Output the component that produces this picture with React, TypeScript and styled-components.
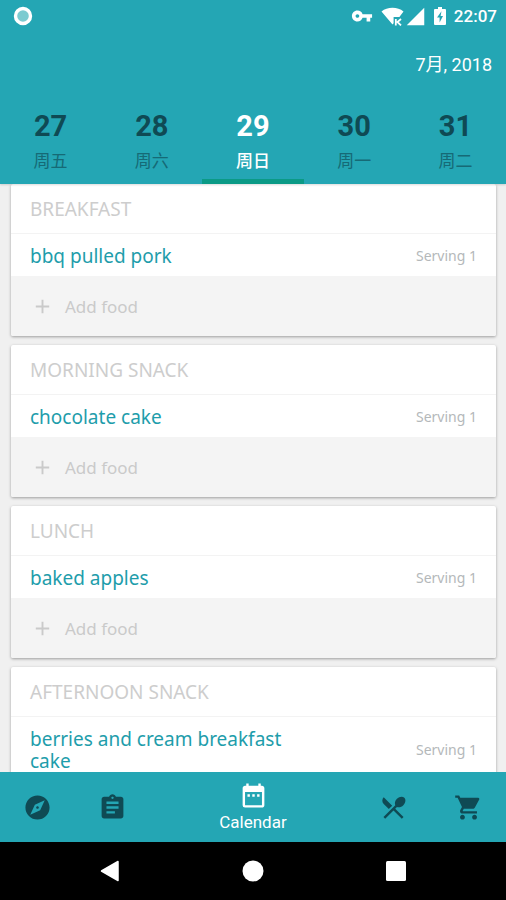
import React from "react";
import styled, { createGlobalStyle } from "styled-components";
import {
  MdAdd,
  MdAssignment,
  MdDateRange,
  MdExplore,
  MdRestaurantMenu,
  MdShoppingCart,
  MdSignalCellular4Bar,
  MdVpnKey,
} from "react-icons/md";

const teal = "#24a6b4";
const ink = "#0f4a54";

const GlobalStyle = createGlobalStyle`
  *, *::before, *::after { box-sizing: border-box; }
  body {
    margin: 0;
    font-family: Roboto, "Noto Sans CJK SC", sans-serif;
    background: #f0f0f0;
  }
  button { font: inherit; border: 0; margin: 0; padding: 0; background: none; cursor: pointer; }
`;

const Screen = styled.div`
  display: flex;
  flex-direction: column;
  height: 100vh;
  overflow: hidden;
`;

const Header = styled.header`
  flex: none;
  background: ${teal};
  color: #fff;
  box-shadow: 0 1px 2px rgba(0, 0, 0, 0.15);
  z-index: 1;
`;

const StatusBar = styled.div`
  display: flex;
  align-items: center;
  justify-content: space-between;
  height: 32px;
  padding: 0 9px 0 13px;
`;

const StatusIcons = styled.div`
  display: flex;
  align-items: center;
  gap: 8px;
  height: 32px;
`;

const SignalIcons = styled.div`
  display: flex;
  align-items: center;
`;

const Clock = styled.time`
  font-size: 17px;
  font-weight: 500;
  line-height: 32px;
`;

const Month = styled.div`
  padding: 20px 14px 0;
  text-align: right;
  font-size: 18px;
  line-height: 26px;
`;

const Days = styled.div`
  display: grid;
  grid-template-columns: repeat(5, 1fr);
  margin-top: 30px;
`;

const Day = styled.button<{ $selected: boolean }>`
  display: flex;
  flex-direction: column;
  align-items: center;
  height: 76px;
  border-bottom: 5px solid ${(p) => (p.$selected ? "#0b9a86" : "transparent")};
  color: ${(p) => (p.$selected ? "#fff" : ink)};
`;

const DayNumber = styled.span`
  font-size: 29px;
  font-weight: 700;
  line-height: 36px;
`;

const DayName = styled.span<{ $selected: boolean }>`
  margin-top: 4px;
  font-family: "Noto Sans CJK SC", sans-serif;
  font-size: 17px;
  font-weight: ${(p) => (p.$selected ? 500 : 400)};
  line-height: 24px;
  color: ${(p) => (p.$selected ? "#fff" : "#166a76")};
`;

const MealList = styled.main`
  flex: 1;
  min-height: 0;
  overflow-y: auto;
  scrollbar-width: none;
  display: flex;
  flex-direction: column;
  gap: 9px;
  padding: 0 10px 0 11px;
  font-family: "Noto Sans", sans-serif;
`;

const MealCard = styled.section`
  flex: none;
  border-radius: 2px;
  background: #fff;
  box-shadow: 0 1px 3px rgba(0, 0, 0, 0.35);
  overflow: hidden;
`;

const MealTitle = styled.h2`
  margin: 0;
  padding: 13px 19px 11px;
  border-bottom: 1px solid #f3f3f3;
  font-size: 19px;
  font-weight: 400;
  line-height: 25px;
  color: #cdcdcd;
`;

const FoodRow = styled.div`
  display: flex;
  align-items: center;
  justify-content: space-between;
  padding: 11px 19px 9px;
`;

const FoodName = styled.a`
  max-width: 270px;
  font-size: 19px;
  line-height: 22px;
  color: #1e9dab;
  text-decoration: none;
`;

const Serving = styled.span`
  font-size: 14px;
  line-height: 22px;
  color: #b4b8ba;
`;

const AddFood = styled.button`
  display: flex;
  align-items: center;
  gap: 11px;
  width: 100%;
  height: 60px;
  padding: 0 20px;
  background: #f4f4f4;
  font-size: 17px;
  color: #cacaca;
  text-align: left;
`;

const TabBar = styled.nav`
  flex: none;
  display: flex;
  height: 70px;
  background: ${teal};
  z-index: 1;
`;

const Tab = styled.button<{ $active?: boolean }>`
  display: flex;
  flex-direction: column;
  align-items: center;
  justify-content: center;
  flex: ${(p) => (p.$active ? "1 1 0" : "0 0 75px")};
  color: ${(p) => (p.$active ? "#fff" : ink)};
`;

const TabLabel = styled.span`
  font-size: 17px;
  line-height: 24px;
`;

const SystemBar = styled.footer`
  flex: none;
  display: grid;
  grid-template-columns: repeat(3, 143px);
  justify-content: center;
  height: 58px;
  background: #000;
`;

const SystemButton = styled.button`
  display: flex;
  align-items: center;
  justify-content: center;
`;

const days = [
  { number: 27, name: "周五" },
  { number: 28, name: "周六" },
  { number: 29, name: "周日", selected: true },
  { number: 30, name: "周一" },
  { number: 31, name: "周二" },
];

const meals = [
  { title: "BREAKFAST", food: "bbq pulled pork", open: true },
  { title: "MORNING SNACK", food: "chocolate cake", open: true },
  { title: "LUNCH", food: "baked apples", open: true },
  { title: "AFTERNOON SNACK", food: "berries and cream breakfast cake", open: false },
];

const RecordIcon = () => (
  <svg width="20" height="20" viewBox="0 0 20 20" aria-hidden="true">
    <circle cx="10" cy="10" r="7.5" fill="#7ccbd0" stroke="#fff" strokeWidth="3.4" />
  </svg>
);

const WifiIcon = () => (
  <svg width="24" height="20" viewBox="0 0 24 20" aria-hidden="true">
    <path d="M11.5 18.5 .5 5.4C3.5 3 7.3 1.8 11.5 1.8S19.5 3 22.5 5.4L18.4 11H12.6V17.2Z" fill="#fff" />
    <path d="M14.8 13v6.4M20 13l-3.6 3 3.6 3.4" fill="none" stroke="#fff" strokeWidth="1.8" />
  </svg>
);

const BatteryIcon = () => (
  <svg width="12" height="18" viewBox="0 0 12 18" aria-hidden="true">
    <path d="M4 0h4v2h3a1 1 0 0 1 1 1v14a1 1 0 0 1-1 1H1a1 1 0 0 1-1-1V3a1 1 0 0 1 1-1h3Z" fill="#fff" />
    <path d="M7.5 4.2 3 10.6h2.6v5L9 9H6.6Z" fill={teal} />
  </svg>
);

export default function App() {
  return (
    <Screen>
      <GlobalStyle />
      <Header>
        <StatusBar>
          <RecordIcon />
          <StatusIcons>
            <MdVpnKey size={22} />
            <SignalIcons>
              <WifiIcon />
              <MdSignalCellular4Bar size={21} />
            </SignalIcons>
            <BatteryIcon />
            <Clock>22:07</Clock>
          </StatusIcons>
        </StatusBar>
        <Month>7月, 2018</Month>
        <Days>
          {days.map((d) => (
            <Day key={d.number} $selected={!!d.selected} aria-pressed={!!d.selected}>
              <DayNumber>{d.number}</DayNumber>
              <DayName $selected={!!d.selected}>{d.name}</DayName>
            </Day>
          ))}
        </Days>
      </Header>

      <MealList>
        {meals.map((m) => (
          <MealCard key={m.title}>
            <MealTitle>{m.title}</MealTitle>
            <FoodRow>
              <FoodName href="#">{m.food}</FoodName>
              <Serving>Serving 1</Serving>
            </FoodRow>
            {m.open && (
              <AddFood>
                <MdAdd size={23} />
                Add food
              </AddFood>
            )}
          </MealCard>
        ))}
      </MealList>

      <TabBar>
        <Tab aria-label="Explore">
          <MdExplore size={29} />
        </Tab>
        <Tab aria-label="Plans">
          <MdAssignment size={29} />
        </Tab>
        <Tab $active aria-current="page">
          <MdDateRange size={29} />
          <TabLabel>Calendar</TabLabel>
        </Tab>
        <Tab aria-label="Recipes">
          <MdRestaurantMenu size={29} />
        </Tab>
        <Tab aria-label="Shopping list">
          <MdShoppingCart size={29} />
        </Tab>
      </TabBar>

      <SystemBar>
        <SystemButton aria-label="Back">
          <svg width="20" height="22" viewBox="0 0 20 22">
            <path d="M18 1.5v19L1.5 11Z" fill="#fff" stroke="#fff" strokeWidth="1.5" strokeLinejoin="round" />
          </svg>
        </SystemButton>
        <SystemButton aria-label="Home">
          <svg width="22" height="22" viewBox="0 0 22 22">
            <circle cx="11" cy="11" r="10.5" fill="#fff" />
          </svg>
        </SystemButton>
        <SystemButton aria-label="Recent apps">
          <svg width="20" height="20" viewBox="0 0 20 20">
            <rect width="20" height="20" rx="1.5" fill="#fff" />
          </svg>
        </SystemButton>
      </SystemBar>
    </Screen>
  );
}
